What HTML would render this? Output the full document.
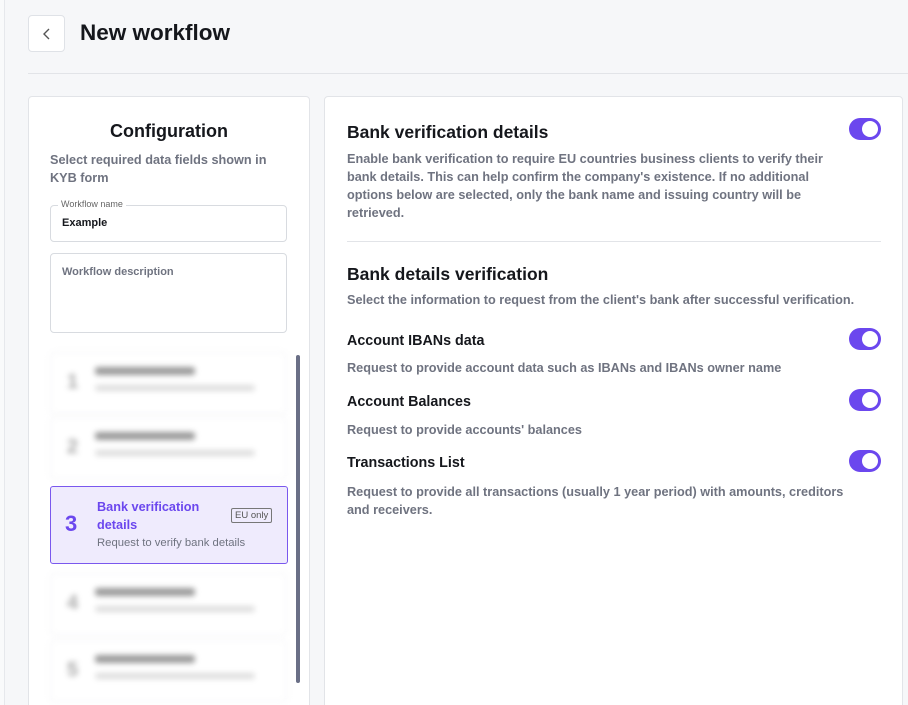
<!DOCTYPE html>
<html><head><style>
*{box-sizing:border-box;margin:0;padding:0}
html,body{width:908px;height:705px;overflow:hidden}
body{background:#f6f7f9;font-family:"Liberation Sans",sans-serif;position:relative;color:#15171c}
.lstrip{position:absolute;left:0;top:0;width:5px;height:705px;background:#f9fafb;border-right:1px solid #e6e8ec}
.back{position:absolute;left:28px;top:15px;width:37px;height:37px;border:1px solid #dfe2e7;border-radius:4px;background:#fff}
.back svg{position:absolute;left:12px;top:11px}
h1{position:absolute;left:80px;top:20px;font-size:22.5px;font-weight:bold;color:#15171c}
.hr{position:absolute;left:28px;right:0;top:73px;height:1px;background:#e2e4e8}
.card{position:absolute;background:#fff;border:1px solid #e2e4e8;border-radius:4px}
.t{position:absolute;white-space:nowrap}
.g{color:#6f7380;font-weight:bold;font-size:12.7px}
.toggle{position:absolute;width:32px;height:22px;border-radius:11px;background:#6b47ee}
.toggle:after{content:"";position:absolute;right:3px;top:3px;width:16px;height:16px;border-radius:50%;background:#fff}
.item{position:absolute;left:50px;width:237px;height:62px;filter:blur(3px);background:#fff;border:1px solid #f0f0f3;border-radius:4px}
.item .n{position:absolute;left:16px;top:18px;font-size:20px;font-weight:bold;color:#aaa}
.item .a{position:absolute;left:44px;top:14px;width:100px;height:8px;background:#999;border-radius:3px}
.item .b{position:absolute;left:44px;top:32px;width:160px;height:6px;background:#ddd;border-radius:3px}
</style></head><body>
<div class="lstrip"></div>
<div class="back"><svg width="12" height="14" viewBox="0 0 12 14"><path d="M8 2 L3 7 L8 12" fill="none" stroke="#555" stroke-width="1.4"/></svg></div>
<h1>New workflow</h1>
<div class="hr"></div>

<div class="card" style="left:28px;top:96px;width:282px;height:620px"></div>
<div class="t" style="left:28px;width:282px;text-align:center;top:121px;font-size:18px;font-weight:bold">Configuration</div>
<div class="t g" style="left:50px;top:151px;line-height:18px;white-space:normal;width:230px">Select required data fields shown in KYB form</div>
<div style="position:absolute;left:50px;top:205px;width:237px;height:37px;border:1px solid #d8dbe0;border-radius:4px"></div>
<div class="t" style="left:58px;top:199px;font-size:9px;color:#666;background:#fff;padding:0 3px">Workflow name</div>
<div class="t" style="left:62px;top:217px;font-size:11px;font-weight:bold">Example</div>
<div style="position:absolute;left:50px;top:253px;width:237px;height:80px;border:1px solid #d8dbe0;border-radius:4px"></div>
<div class="t" style="left:62px;top:266px;font-size:11px;font-weight:bold;color:#6f7380">Workflow description</div>

<div class="item" style="top:352px"><div class="n">1</div><div class="a"></div><div class="b"></div></div>
<div class="item" style="top:417px"><div class="n">2</div><div class="a"></div><div class="b"></div></div>
<div style="position:absolute;left:50px;top:486px;width:238px;height:78px;border:1px solid #7a58ee;border-radius:3px;background:#efebfd"></div>
<div class="t" style="left:65px;top:511px;font-size:22px;font-weight:bold;color:#6b47ee">3</div>
<div class="t" style="left:97px;top:498px;font-size:12.7px;font-weight:bold;color:#6b47ee;line-height:18px">Bank verification<br>details</div>
<div class="t" style="left:231px;top:508px;font-size:9.5px;color:#555;border:1px solid #777;border-radius:2px;padding:1px 3px">EU only</div>
<div class="t" style="left:97px;top:537px;font-size:11.3px;color:#6f7380">Request to verify bank details</div>
<div class="item" style="top:573px"><div class="n">4</div><div class="a"></div><div class="b"></div></div>
<div class="item" style="top:640px"><div class="n">5</div><div class="a"></div><div class="b"></div></div>
<div style="position:absolute;left:296px;top:355px;width:4px;height:328px;background:#6a6f86;border-radius:2px"></div>

<div class="card" style="left:324px;top:96px;width:579px;height:620px"></div>
<div class="t" style="left:347px;top:122px;font-size:17.5px;font-weight:bold">Bank verification details</div>
<div class="toggle" style="left:849px;top:118px"></div>
<div class="t g" style="left:347px;top:150px;line-height:18px;white-space:normal;width:500px">Enable bank verification to require EU countries business clients to verify their bank details. This can help confirm the company's existence. If no additional options below are selected, only the bank name and issuing country will be retrieved.</div>
<div style="position:absolute;left:347px;top:241px;width:534px;height:1px;background:#e2e4e8"></div>
<div class="t" style="left:347px;top:264px;font-size:17.5px;font-weight:bold">Bank details verification</div>
<div class="t g" style="left:347px;top:293px">Select the information to request from the client's bank after successful verification.</div>
<div class="t" style="left:347px;top:333px;font-size:14.3px;font-weight:bold">Account IBANs data</div>
<div class="toggle" style="left:849px;top:328px"></div>
<div class="t g" style="left:347px;top:361px">Request to provide account data such as IBANs and IBANs owner name</div>
<div class="t" style="left:347px;top:394px;font-size:14.3px;font-weight:bold">Account Balances</div>
<div class="toggle" style="left:849px;top:389px"></div>
<div class="t g" style="left:347px;top:423px">Request to provide accounts' balances</div>
<div class="t" style="left:347px;top:455px;font-size:14.3px;font-weight:bold">Transactions List</div>
<div class="toggle" style="left:849px;top:450px"></div>
<div class="t g" style="left:347px;top:483px;line-height:18px;white-space:normal;width:510px">Request to provide all transactions (usually 1 year period) with amounts, creditors and receivers.</div>
</body></html>
